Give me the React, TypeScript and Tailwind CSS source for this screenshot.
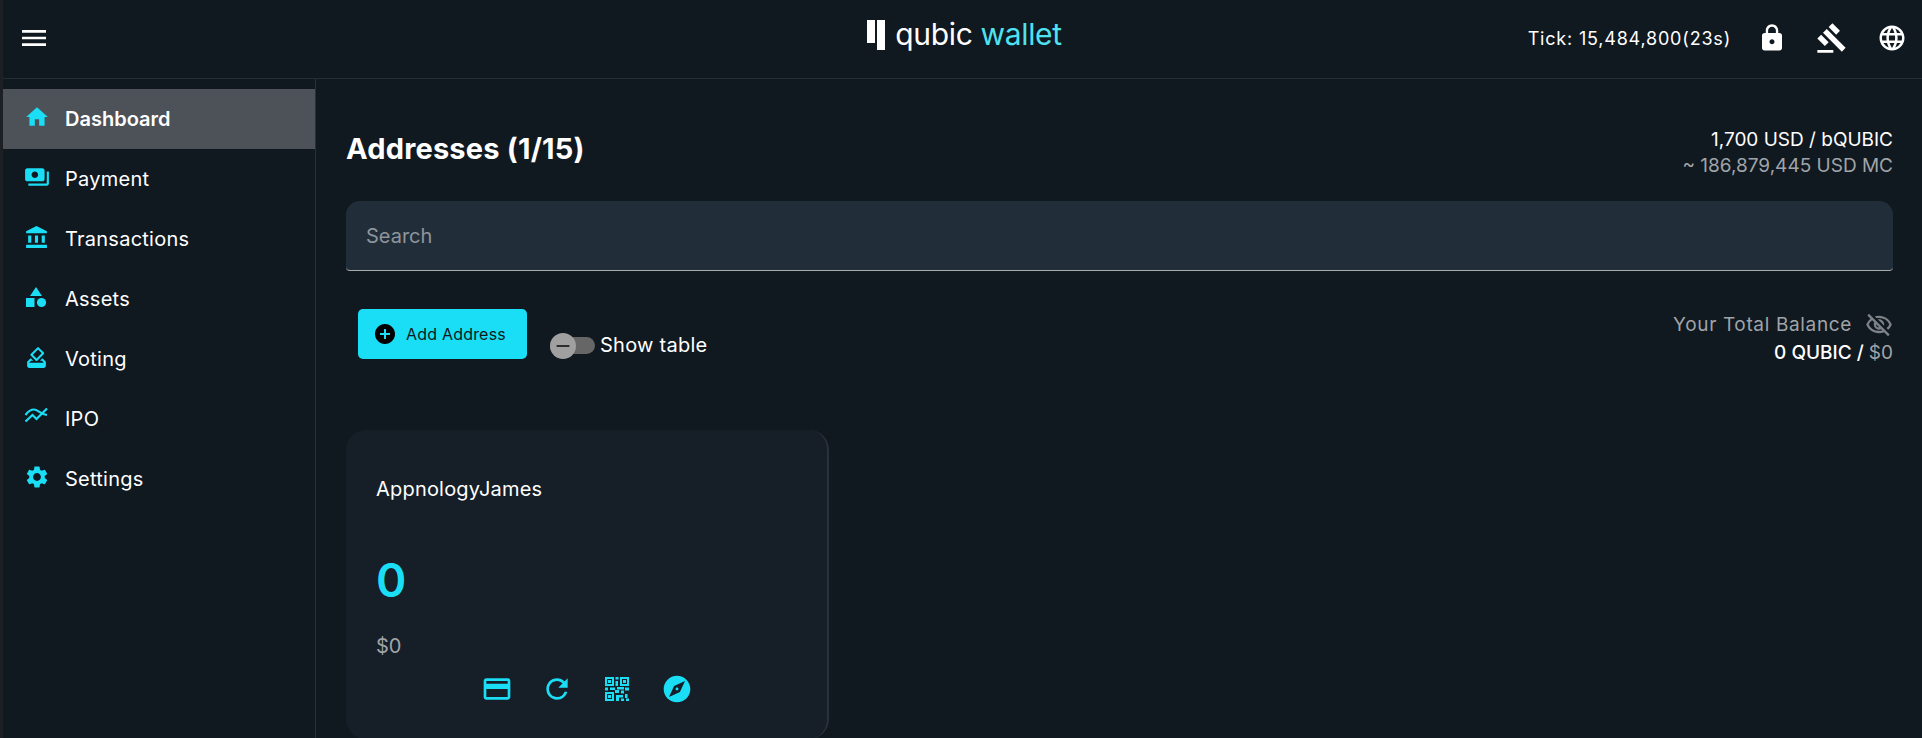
import {
  MdAccountBalance,
  MdAddCircle,
  MdExplore,
  MdGavel,
  MdHome,
  MdHowToVote,
  MdLanguage,
  MdLock,
  MdMenu,
  MdOutlineCreditCard,
  MdOutlineVisibilityOff,
  MdPayments,
  MdRefresh,
  MdRemove,
  MdSettings,
} from "react-icons/md";
import type { ReactNode } from "react";

function AssetsIcon() {
  return (
    <svg width="24" height="24" viewBox="0 0 24 24" fill="currentColor">
      <path d="M12 2 L18 11 H6 Z" />
      <rect x="2" y="13" width="8.5" height="9" />
      <circle cx="17.5" cy="17.5" r="4.6" />
    </svg>
  );
}

function ChartIcon() {
  return (
    <svg width="25" height="25" viewBox="0 0 25 25" fill="none" stroke="currentColor" strokeWidth="2.2">
      <path d="M1.5 10 C4 6.5 7 4.5 10 4.5 C14 4.5 16 9 23 10" />
      <path d="M1.5 16.5 L8.5 10 L12.5 14 L23 3.5" />
    </svg>
  );
}

// rough QR glyph, same blocks as the reference at this size
function QrIcon() {
  return (
    <svg width="24" height="24" viewBox="0 0 24 24" fill="currentColor">
      <path fillRule="evenodd" d="M0 0h9v9H0z M2 2v5h5V2z" />
      <rect x="3" y="3" width="3" height="3" />
      <path fillRule="evenodd" d="M15 0h9v9h-9z M17 2v5h5V2z" />
      <rect x="18" y="3" width="3" height="3" />
      <path fillRule="evenodd" d="M0 15h9v9H0z M2 17v5h5v-5z" />
      <rect x="3" y="18" width="3" height="3" />
      <rect x="10.5" y="0" width="3" height="2.5" />
      <rect x="10.5" y="4" width="2.5" height="5" />
      <rect x="0" y="10.5" width="3" height="3" />
      <rect x="5" y="10.5" width="5" height="2.5" />
      <rect x="10" y="13" width="4" height="3" />
      <rect x="12" y="10" width="7" height="2.5" />
      <rect x="20" y="10.5" width="4" height="3" />
      <rect x="16" y="13.5" width="3" height="3" />
      <rect x="11" y="18" width="3" height="6" />
      <rect x="14" y="18" width="4" height="2.5" />
      <rect x="16" y="21.5" width="3" height="2.5" />
      <rect x="20" y="17" width="2.5" height="4" />
      <rect x="21" y="21.5" width="3" height="2.5" />
    </svg>
  );
}

const navItems: { label: string; icon: ReactNode; active?: boolean }[] = [
  { label: "Dashboard", icon: <MdHome size={26} />, active: true },
  { label: "Payment", icon: <MdPayments size={26} /> },
  { label: "Transactions", icon: <MdAccountBalance size={25} /> },
  { label: "Assets", icon: <AssetsIcon /> },
  { label: "Voting", icon: <MdHowToVote size={25} /> },
  { label: "IPO", icon: <ChartIcon /> },
  { label: "Settings", icon: <MdSettings size={26} /> },
];

export default function App() {
  return (
    <div className="h-[738px] w-full overflow-hidden border-l-[3px] border-[#1c1f24] bg-[#101820] font-['Inter','Liberation_Sans',sans-serif] text-white">
      {/* Header */}
      <header className="grid h-[79px] grid-cols-[1fr_auto_1fr] items-center border-b border-[#262d35] pb-[2px] pl-[15px] pr-[15px]">
        <MdMenu size={32} />
        <div className="flex items-start gap-[10px] pb-[6px] pl-[4px]">
          <svg width="18" height="30" viewBox="0 0 18 30" fill="#ffffff">
            <rect x="0" y="0" width="8" height="23" />
            <rect x="10" y="0" width="8" height="30" />
          </svg>
          <span className="text-[30px] leading-[28px] tracking-[-0.35px]">
            qubic <span className="text-[#4fe3f2]">wallet</span>
          </span>
        </div>
        <div className="flex items-center justify-end">
          <span className="mr-[26px] text-[18px] tracking-[0.8px]">Tick: 15,484,800(23s)</span>
          <MdLock size={30} />
          <MdGavel size={32} className="ml-[29px]" />
          <MdLanguage size={30} className="ml-[29px]" />
        </div>
      </header>

      <div className="flex h-[659px]">
        {/* Sidebar */}
        <aside className="w-[313px] shrink-0 border-r border-[#2a3038] pt-[10px]">
          {navItems.map((item) => (
            <div
              key={item.label}
              className={`flex h-[60px] items-center pl-[21px] ${item.active ? "bg-[#4d5158] font-semibold" : "tracking-[0.25px]"}`}
            >
              <span className="flex w-[41px] -translate-y-[2px] text-[#1adef5]">{item.icon}</span>
              <span className="text-[20px]">{item.label}</span>
            </div>
          ))}
        </aside>

        {/* Main */}
        <main className="flex-1 pl-[30px] pr-[29px]">
          <div className="flex h-[122px] items-start justify-between">
            <h1 className="mt-[49px] text-[29px] font-bold leading-[42px] tracking-[0.2px]">Addresses (1/15)</h1>
            <div className="mt-[48px] text-right text-[19px] leading-[26px]">
              <div>1,700 USD / bQUBIC</div>
              <div className="text-[#a0a4a8]">~ 186,879,445 USD MC</div>
            </div>
          </div>

          <div className="flex h-[70px] items-center rounded-t-[14px] rounded-b-[4px] border-b border-[#a8acb0] bg-[#212e3a] px-[20px] pt-[1px] text-[20px] text-[#8e959b]">
            Search
          </div>

          <div className="flex h-[159px] items-start justify-between">
            <div className="flex items-start">
              <button
                type="button"
                className="ml-[12px] mt-[38px] flex h-[50px] w-[169px] items-center rounded-[5px] bg-[#1adef5] pl-[15px] text-[16px] tracking-[0.2px] text-[#0d1a20]"
              >
                <MdAddCircle size={24} className="text-black" />
                <span className="ml-[9px]">Add Address</span>
              </button>
              <div className="ml-[23px] mt-[59px] flex items-center">
                <div className="relative h-[17px] w-[45px] rounded-full bg-[#666666]">
                  <div className="absolute -top-[4px] left-0 flex h-[26px] w-[26px] items-center justify-center rounded-full bg-[#a0a0a0] text-[#222222]">
                    <MdRemove size={22} />
                  </div>
                </div>
                <span className="ml-[5px] text-[20px] tracking-[0.25px]">Show table</span>
              </div>
            </div>
            <div className="mt-[40px] text-right text-[19px] leading-[28px]">
              <div className="flex items-center justify-end tracking-[0.65px] text-[#a0a4a8]">
                Your Total Balance
                <MdOutlineVisibilityOff size={28} className="ml-[13px] text-[#7d8287]" />
              </div>
              <div className="font-medium">
                0 QUBIC / <span className="font-normal text-[#a0a4a8]">$0</span>
              </div>
            </div>
          </div>

          {/* Address card */}
          <div className="relative h-[309px] w-[483px] rounded-[20px] border-r-2 border-[#2b3138] bg-[#161e28] pl-[30px] pt-[44px]">
            <div className="text-[20px] leading-[30px] tracking-[0.2px]">AppnologyJames</div>
            <div className="mt-[46px] text-[46px] font-semibold leading-[60px] text-[#1adef5]">0</div>
            <div className="mt-[21px] text-[20px] leading-[30px] text-[#a0a4a8]">$0</div>
            <div className="mt-[12px] flex items-center pl-[105px] text-[#1adef5]">
              <MdOutlineCreditCard size={32} />
              <MdRefresh size={32} className="ml-[28px]" />
              <span className="ml-[32px] flex"><QrIcon /></span>
              <MdExplore size={32} className="ml-[32px]" />
            </div>
          </div>
        </main>
      </div>
    </div>
  );
}
